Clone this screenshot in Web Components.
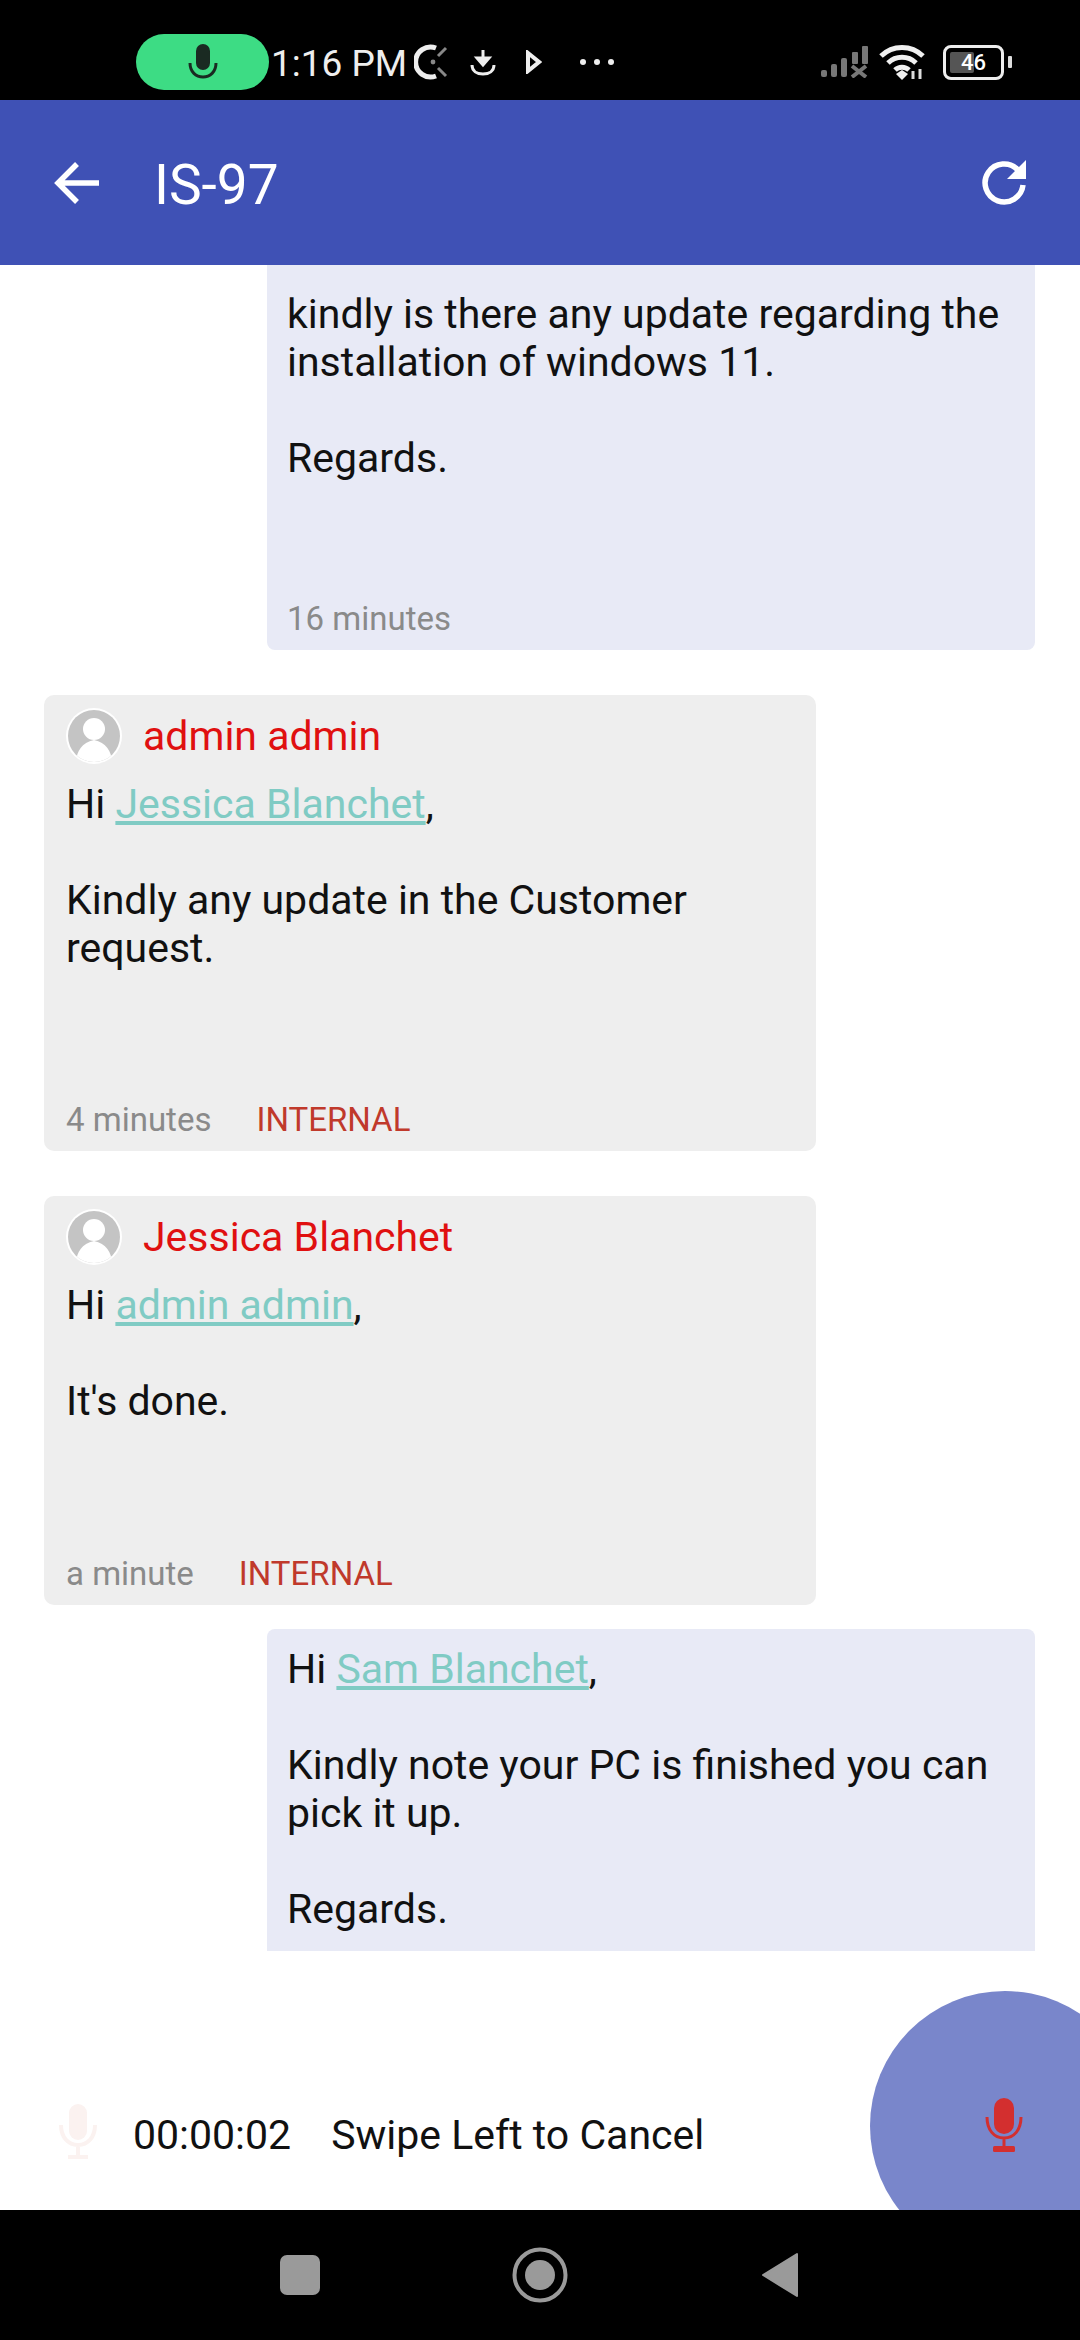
<!DOCTYPE html>
<html>
<head>
<meta charset="utf-8">
<title>IS-97</title>
<style>
html,body{margin:0;padding:0;background:#fff;}
body{width:1080px;height:2340px;overflow:hidden;font-family:Roboto,"Liberation Sans",sans-serif;}
</style>
</head>
<body>
<ticket-app>
    <status-bar slot="top"></status-bar>
    <app-bar slot="top" title="IS-97"></app-bar>

    <chat-bubble side="me" time="16 minutes" cut="top" gap="117">kindly is there any update regarding the installation of windows 11.<br><br>Regards.</chat-bubble>

    <chat-bubble name="admin admin" time="4 minutes" tag="INTERNAL" gap="128" style="margin-top:45px">Hi <a>Jessica Blanchet</a>,<br><br>Kindly any update in the Customer request.</chat-bubble>

    <chat-bubble name="Jessica Blanchet" time="a minute" tag="INTERNAL" gap="129" style="margin-top:45px">Hi <a>admin admin</a>,<br><br>It's done.</chat-bubble>

    <chat-bubble side="me" cut="bottom" style="margin-top:24px">Hi <a>Sam Blanchet</a>,<br><br>Kindly note your PC is finished you can pick it up.<br><br>Regards.</chat-bubble>

    <record-bar slot="bottom" elapsed="00:00:02" hint="Swipe Left to Cancel"></record-bar>
    <nav-bar slot="bottom"></nav-bar>
</ticket-app>

<script>
class TicketApp extends HTMLElement {
    constructor(){
        super();
        this.attachShadow({ mode: 'open' });
        this.shadowRoot.innerHTML = `
            <style>
                :host{display:flex;flex-direction:column;width:1080px;height:2340px;background:#fff;overflow:hidden;}
                .list{flex:1;min-height:0;overflow:hidden;display:flex;flex-direction:column;}
            </style>
            <slot name="top"></slot>
            <div class="list"><slot></slot></div>
            <slot name="bottom"></slot>
        `;
    }
}

class StatusBar extends HTMLElement {
    constructor(){
        super();
        this.attachShadow({ mode: 'open' });
        this.shadowRoot.innerHTML = `
            <style>
                :host{display:flex;align-items:center;height:100px;box-sizing:border-box;background:#000;color:#eee;padding:24px 0 0 136px;font:400 37px Roboto,sans-serif;flex:none;}
                .pill{width:133px;height:56px;border-radius:28px;background:#3ddc84;display:flex;align-items:center;justify-content:center;}
                .time{margin-left:2px;width:146px;white-space:nowrap;padding-top:2px;}
                svg{display:block;flex:none;}
                .right{margin-left:auto;display:flex;align-items:center;}
                .batt{position:relative;margin-left:16px;width:55px;height:29px;border:3px solid #eee;border-radius:8px;display:flex;align-items:center;justify-content:center;font-size:22px;font-weight:500;overflow:hidden;}
                .batt i{position:absolute;left:4px;top:4px;bottom:4px;width:24px;background:#555;border-radius:2px;}
                .batt span{position:relative;color:#fff;}
                .nub{width:4px;height:12px;background:#ddd;margin-left:4px;border-radius:1px;}
            </style>
            <div class="pill">
                <svg width="34" height="38" viewBox="0 0 34 38"><rect x="10" y="1" width="14" height="26" rx="7" fill="#1a2a22"/><path d="M4 20c0 9 6 14 13 14s13-5 13-14" fill="none" stroke="#1a2a22" stroke-width="3"/></svg>
            </div>
            <div class="time">1:16 PM</div>
            <svg width="34" height="40" viewBox="0 0 34 40" style="margin-left:-3px"><path d="M22 6A15 15 0 1 0 22 34" fill="none" stroke="#eee" stroke-width="5"/><circle cx="19" cy="20" r="2.4" fill="#888"/><path d="M24 14l8-8M24 26l8 8" stroke="#888" stroke-width="3"/></svg>
            <svg width="26" height="28" viewBox="0 0 26 28" style="margin-left:22px"><path d="M13 2v13M7 10l6 7 6-7z" fill="#eee" stroke="#eee" stroke-width="3"/><path d="M2 17c0 6 5 9 11 9s11-3 11-9" fill="none" stroke="#eee" stroke-width="3"/></svg>
            <svg width="16" height="24" viewBox="0 0 16 24" style="margin-left:30px"><path d="M2 3l11 9-11 9z" fill="none" stroke="#eee" stroke-width="4"/></svg>
            <svg width="36" height="8" viewBox="0 0 36 8" style="margin-left:37px"><circle cx="4" cy="4" r="3" fill="#eee"/><circle cx="18" cy="4" r="3" fill="#eee"/><circle cx="32" cy="4" r="3" fill="#eee"/></svg>
            <div class="right" style="margin-right:68px">
                <svg width="48" height="32" viewBox="0 0 48 32"><g fill="#777"><rect x="0" y="24" width="6" height="7" rx="2"/><rect x="10" y="18" width="6" height="13" rx="2"/><rect x="20" y="12" width="6" height="19" rx="2"/><rect x="31" y="6" width="6" height="12" rx="1"/><rect x="41" y="0" width="6" height="18" rx="1"/></g><path d="M31 20l14 11M45 20L31 31" stroke="#777" stroke-width="4"/></svg>
                <svg width="48" height="38" viewBox="0 0 48 38" style="margin-left:10px"><path d="M2 13a30 30 0 0 1 42 0M9 20a20 20 0 0 1 28 0M16 27a10 10 0 0 1 14 0" fill="none" stroke="#f0f0f0" stroke-width="5"/><path d="M23 37l-6-6 6-4 6 4z" fill="#f0f0f0"/><path d="M34 36v-8M41 36v-10" stroke="#ddd" stroke-width="3"/></svg>
                <div class="batt"><i></i><span>46</span></div>
                <span class="nub"></span>
            </div>
        `;
    }
}

class AppBar extends HTMLElement {
    constructor(){
        super();
        this.attachShadow({ mode: 'open' });
        this.shadowRoot.innerHTML = `
            <style>
                :host{display:flex;align-items:center;height:165px;box-sizing:border-box;background:#3f51b5;color:#fff;padding:0 50px 0 53px;flex:none;}
                .title{font:400 55px Roboto,sans-serif;margin:5px 0 0 51px;flex:1;}
                svg{display:block;}
            </style>
            <svg width="50" height="44" viewBox="0 0 50 44"><path d="M46 22H6M24 3L5 22l19 19" fill="none" stroke="#fff" stroke-width="5.5"/></svg>
            <div class="title"></div>
            <svg width="50" height="50" viewBox="0 0 50 50"><path d="M38 12A19 19 0 1 0 43 27" fill="none" stroke="#fff" stroke-width="5.5"/><path d="M46 2v19H27z" fill="#fff"/></svg>
        `;
        this.shadowRoot.querySelector('.title').textContent = this.getAttribute('title');
    }
}

class UserAvatar extends HTMLElement {
    constructor(){
        super();
        this.attachShadow({ mode: 'open' });
        this.shadowRoot.innerHTML = `
            <style>:host{display:block;width:56px;height:56px;flex:none;}svg{display:block;}</style>
            <svg width="56" height="56" viewBox="0 0 56 56"><circle cx="28" cy="28" r="28" fill="#fff"/><circle cx="28" cy="28" r="26" fill="#c4c4c4"/><clipPath id="c"><circle cx="28" cy="28" r="26"/></clipPath><g clip-path="url(#c)" fill="#fff"><circle cx="28" cy="21" r="11"/><path d="M28 32c-13 3-18 12-18 24h36c0-12-5-21-18-24z"/></g></svg>
        `;
    }
}

class ChatBubble extends HTMLElement {
    constructor(){
        super();
        this.attachShadow({ mode: 'open' });
        var name = this.getAttribute('name');
        var time = this.getAttribute('time');
        var tag = this.getAttribute('tag');
        var gap = this.getAttribute('gap') || 0;
        var me = this.getAttribute('side') == 'me';
        var cut = this.getAttribute('cut');
        this.shadowRoot.innerHTML = `
            <style>
                :host{display:block;flex:none;box-sizing:border-box;border-radius:${cut=='top'?'0 0 8px 8px':cut=='bottom'?'8px 8px 0 0':'10px'};
                    background:${me?'#e8eaf6':'#eeeeee'};width:${me?768:772}px;margin-left:${me?267:44}px;
                    padding:${me?(cut=='top'?'25px':'16px'):'13px'} 20px ${cut=='bottom'?'40px':'0'} ${me?20:22}px;font:400 41px/48px Roboto,sans-serif;color:#111;}
                .head{display:flex;align-items:center;height:56px;margin-bottom:16px;}
                .head span{margin-left:21px;color:#e01010;font-size:41px;line-height:56px;}
                .foot{display:flex;align-items:center;height:40px;padding-bottom:11px;font-size:33px;color:#8a8a8a;margin-top:${gap}px;}
                .foot b{font-weight:400;font-size:33px;color:#c0392b;margin-left:45px;}
                ::slotted(a){color:#80cbc4;text-decoration:underline;}
            </style>
            ${name?`<div class="head"><user-avatar></user-avatar><span>${name}</span></div>`:''}
            <div class="body"><slot></slot></div>
            ${time?`<div class="foot">${time}${tag?`<b>${tag}</b>`:''}</div>`:''}
        `;
    }
}

class RecordBar extends HTMLElement {
    constructor(){
        super();
        this.attachShadow({ mode: 'open' });
        this.shadowRoot.innerHTML = `
            <style>
                :host{display:block;position:relative;height:259px;box-sizing:border-box;padding:152px 0 0 0;flex:none;font:400 41px Roboto,sans-serif;color:#111;background:#fff;overflow:hidden;}
                .row{display:flex;align-items:center;height:58px;padding-left:58px;}
                .time{margin:6px 0 0 35px;}
                .hint{margin:6px 0 0 40px;}
                .fab{position:absolute;left:870px;top:40px;width:270px;height:270px;border-radius:50%;background:#7986cb;}
                .fab svg{position:absolute;left:115px;top:107px;}
                svg{display:block;}
            </style>
            <div class="row">
                <svg width="40" height="58" viewBox="0 0 40 58"><rect x="11" y="1" width="18" height="36" rx="9" fill="#fbf2f0"/><path d="M3 22c0 12 7 20 17 20s17-8 17-20M20 42v10M10 54h20" fill="none" stroke="#fbf2f0" stroke-width="4"/></svg>
                <span class="time"></span>
                <span class="hint"></span>
            </div>
            <div class="fab">
                <svg width="38" height="54" viewBox="0 0 38 54"><rect x="9" y="0" width="20" height="36" rx="10" fill="#d32f2f"/><path d="M2 19c0 13 7 21 17 21s17-8 17-21M19 40v9" fill="none" stroke="#d32f2f" stroke-width="3"/><rect x="8" y="48" width="22" height="6" rx="1.5" fill="#d32f2f"/></svg>
            </div>
        `;
        this.shadowRoot.querySelector('.time').textContent = this.getAttribute('elapsed');
        this.shadowRoot.querySelector('.hint').textContent = this.getAttribute('hint');
    }
}

class NavBar extends HTMLElement {
    constructor(){
        super();
        this.attachShadow({ mode: 'open' });
        this.shadowRoot.innerHTML = `
            <style>
                :host{display:flex;align-items:center;height:130px;box-sizing:border-box;background:#000;padding:0 0 0 280px;flex:none;}
                svg{display:block;flex:none;}
            </style>
            <svg width="40" height="40" viewBox="0 0 40 40"><rect width="40" height="40" rx="7" fill="#9a9a9a"/></svg>
            <svg width="56" height="56" viewBox="0 0 56 56" style="margin-left:192px"><circle cx="28" cy="28" r="25.5" fill="none" stroke="#9a9a9a" stroke-width="4"/><circle cx="28" cy="28" r="15" fill="#9a9a9a"/></svg>
            <svg width="38" height="46" viewBox="0 0 38 46" style="margin-left:193px"><path d="M36 2v42L2 23z" fill="#9a9a9a" stroke="#9a9a9a" stroke-width="2" stroke-linejoin="round"/></svg>
        `;
    }
}

customElements.define('ticket-app', TicketApp);
customElements.define('status-bar', StatusBar);
customElements.define('app-bar', AppBar);
customElements.define('user-avatar', UserAvatar);
customElements.define('chat-bubble', ChatBubble);
customElements.define('record-bar', RecordBar);
customElements.define('nav-bar', NavBar);
</script>
</body>
</html>
